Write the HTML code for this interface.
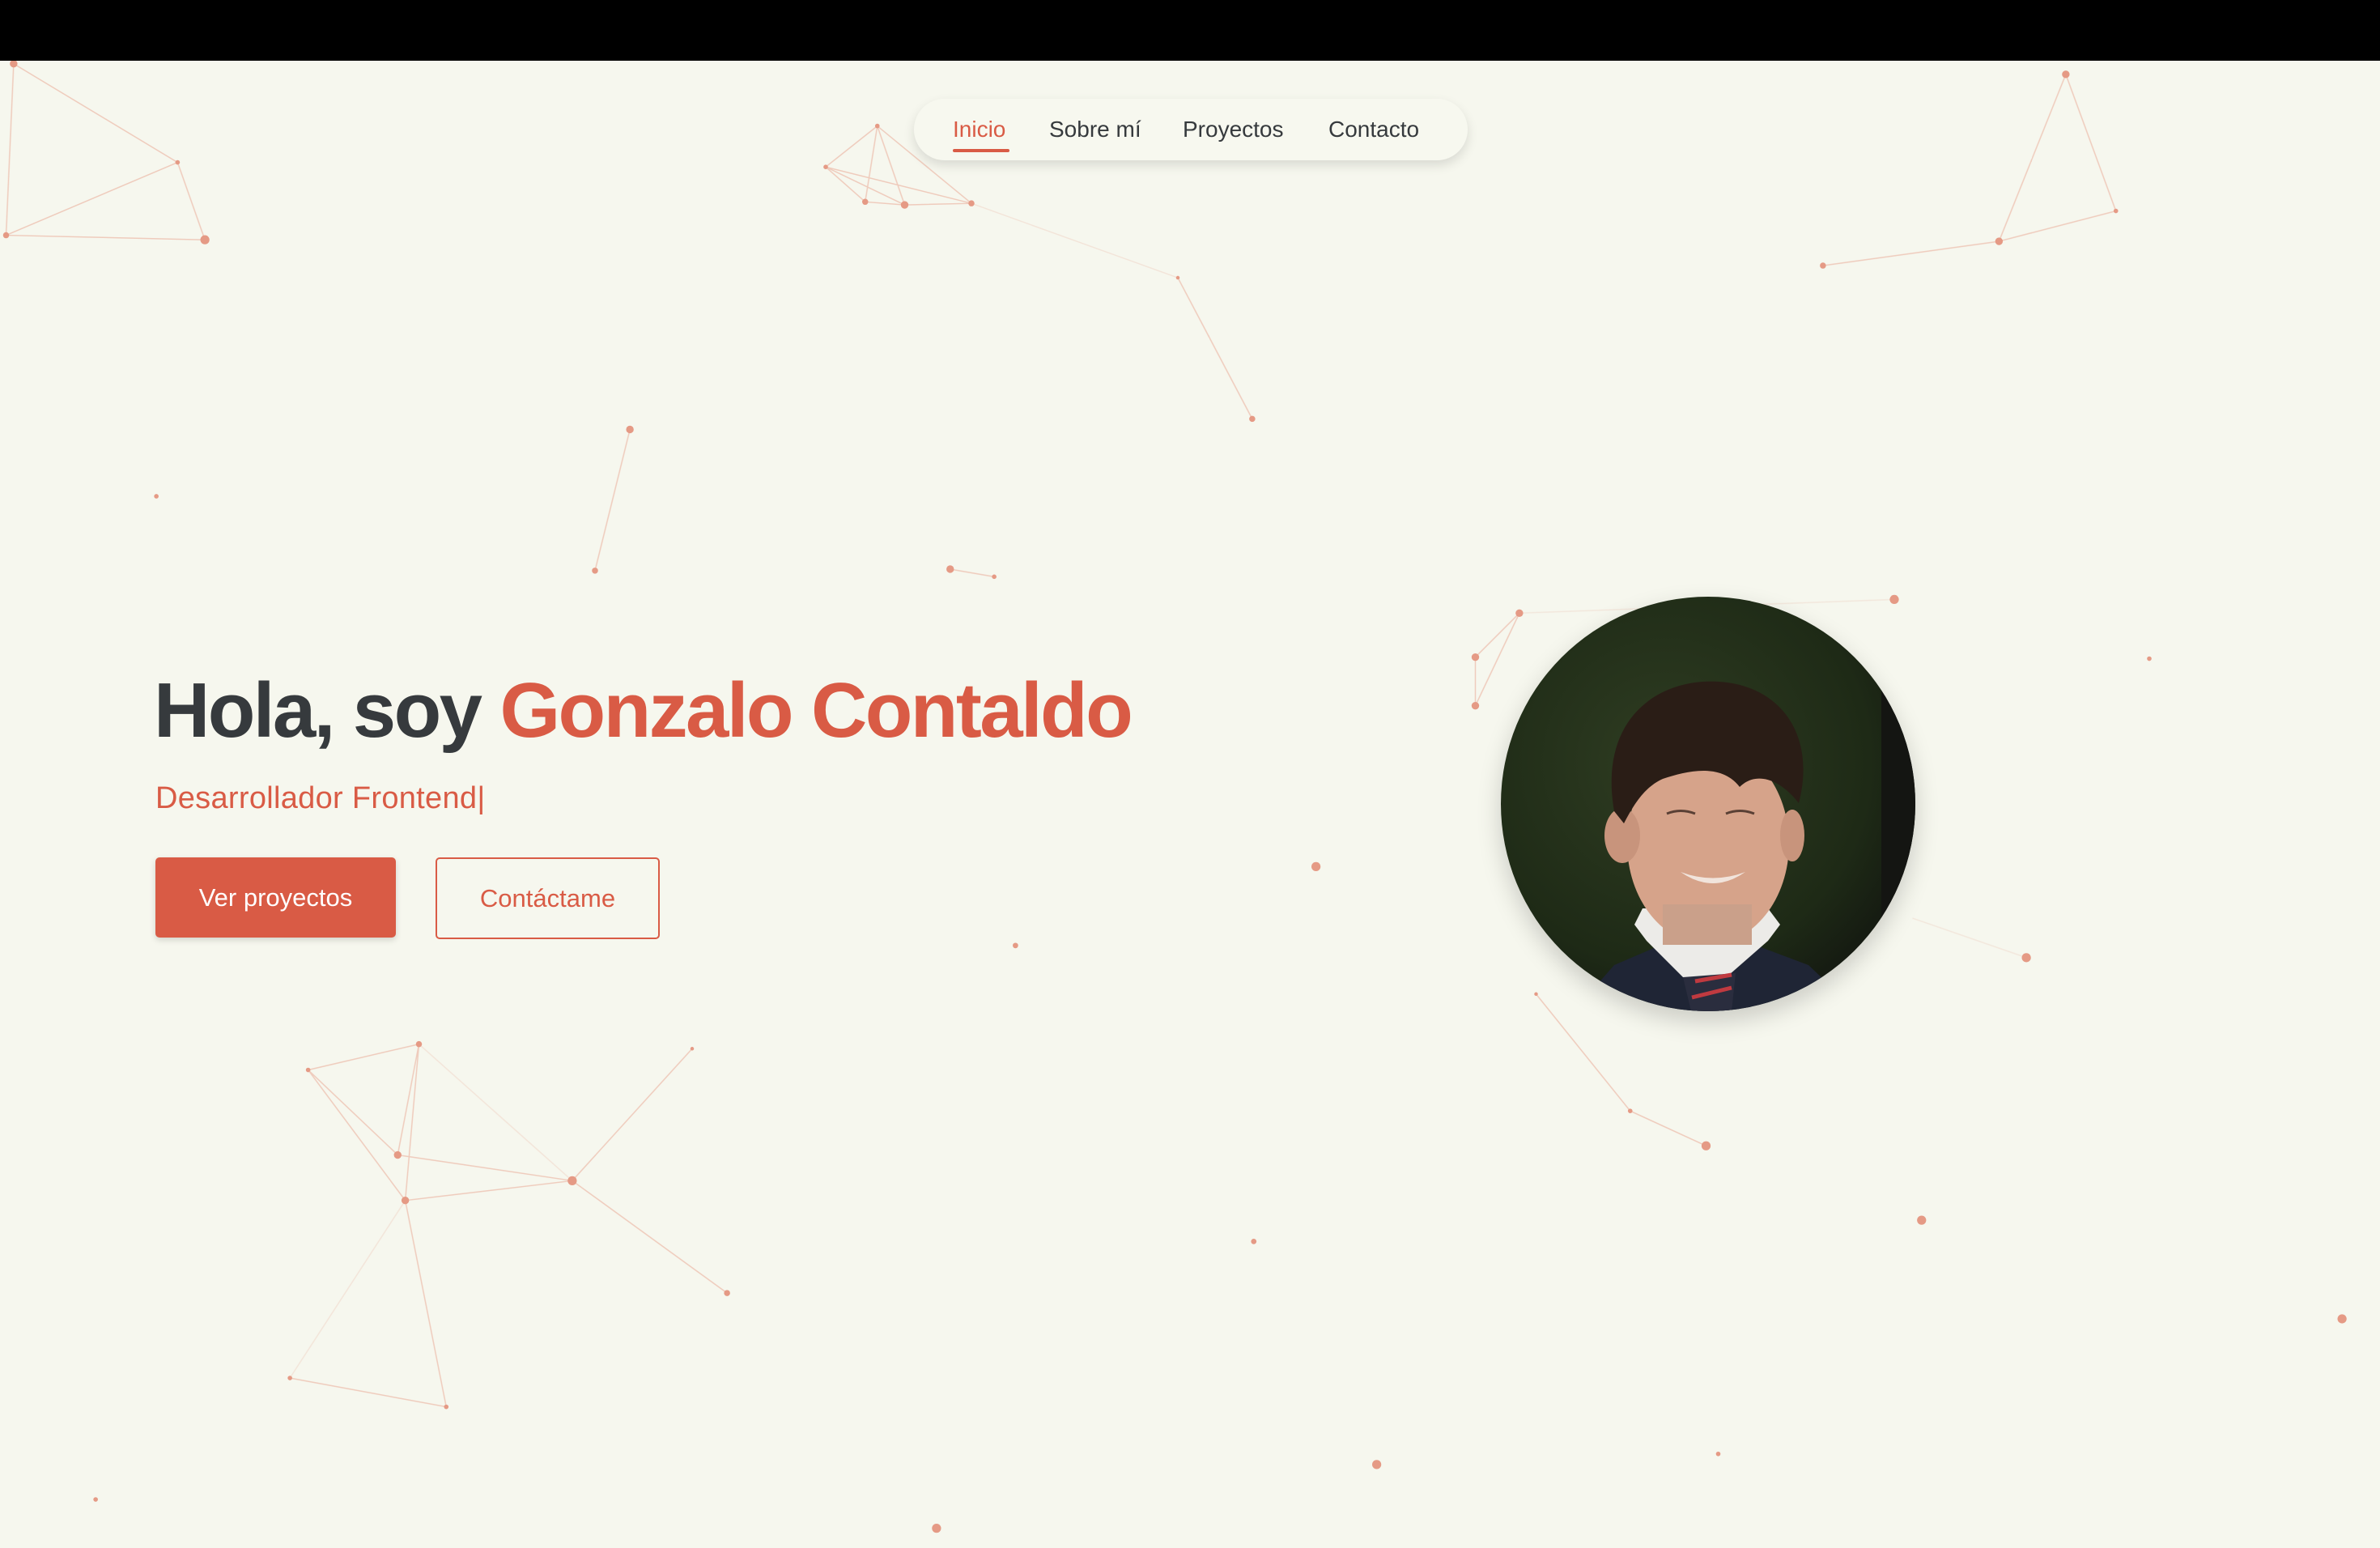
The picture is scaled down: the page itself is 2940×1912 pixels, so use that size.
<!DOCTYPE html>
<html><head><meta charset="utf-8"><style>
html,body{margin:0;padding:0}
body{width:2940px;height:1912px;background:#f6f7ee;position:relative;overflow:hidden;font-family:"Liberation Sans",sans-serif}
.top{position:absolute;left:0;top:0;width:2940px;height:75px;background:#000}
svg.bg{position:absolute;left:0;top:0}
.nav{position:absolute;left:1129px;top:122px;width:684px;height:76px;border-radius:38px;background:#f7f8ef;box-shadow:0 6px 14px rgba(0,0,0,.12)}
.nav span{position:absolute;top:21px;font-size:28px;color:#363a3d;line-height:34px}
.nav .act{color:#d95b45}
.nav .ul{position:absolute;left:48px;top:62px;width:70px;height:4px;border-radius:2px;background:#d95b45}
h1{position:absolute;left:190px;top:823px;margin:0;font-size:96px;font-weight:bold;color:#363a3d;letter-spacing:-2.6px;white-space:nowrap;line-height:110px}
h1 b{color:#d95b45}
.sub{position:absolute;left:192px;top:962px;font-size:38px;color:#d95b45;letter-spacing:0.3px;line-height:48px}
.b1{position:absolute;left:192px;top:1059px;width:297px;height:99px;background:#d95b45;border-radius:5px;color:#fff;font-size:31px;line-height:99px;text-align:center;box-shadow:0 3px 8px rgba(0,0,0,.15)}
.b2{position:absolute;left:538px;top:1059px;width:273px;height:97px;border:2px solid #d95b45;border-radius:5px;color:#d95b45;font-size:31px;line-height:97px;text-align:center}
.ph{position:absolute;left:1854px;top:737px;width:512px;height:512px;border-radius:50%;overflow:hidden;box-shadow:0 12px 30px rgba(0,0,0,.18)}
</style></head><body>
<svg class="bg" width="2940" height="1912" viewBox="0 0 1568 1020" preserveAspectRatio="none">
<g stroke="#e9a894" stroke-width="0.8" fill="none" opacity=".55">
<path d="M9 42L117 107L135 158L4 155L9 42M4 155L117 107"/>
<path d="M578 83L544 110L570 133L596 135L640 134L578 83L570 133M578 83L596 135M544 110L596 135M544 110L640 134"/>
<path d="M640 134L776 183" opacity=".4"/><path d="M776 183L825 276"/>
<path d="M1361 49L1317 159L1394 139L1361 49M1317 159L1201 175"/>
<path d="M415 283L392 376M626 375L655 380"/>
<path d="M1001 404L972 433L972 465L1001 404"/><path d="M1001 404L1248 395M1260 605L1335 631" opacity=".35"/>
<path d="M1012 655L1074 732L1124 755"/>
<path d="M203 705L276 688L262 761L203 705L267 791L276 688M262 761L377 778L267 791M377 778L456 691M377 778L479 852M267 791L294 927L191 908"/>
<path d="M276 688L377 778M267 791L191 908" opacity=".4"/>
</g>
<g fill="#e59a85">
<circle cx="9" cy="42" r="2.5"/><circle cx="117" cy="107" r="1.5"/><circle cx="135" cy="158" r="3"/><circle cx="4" cy="155" r="2"/>
<circle cx="578" cy="83" r="1.5"/><circle cx="544" cy="110" r="1.5"/><circle cx="570" cy="133" r="2"/><circle cx="596" cy="135" r="2.5"/><circle cx="640" cy="134" r="2"/>
<circle cx="776" cy="183" r="1.2"/><circle cx="825" cy="276" r="2"/>
<circle cx="1361" cy="49" r="2.5"/><circle cx="1317" cy="159" r="2.5"/><circle cx="1394" cy="139" r="1.5"/><circle cx="1201" cy="175" r="2"/>
<circle cx="415" cy="283" r="2.5"/><circle cx="392" cy="376" r="2"/><circle cx="626" cy="375" r="2.5"/><circle cx="655" cy="380" r="1.5"/><circle cx="103" cy="327" r="1.5"/>
<circle cx="1001" cy="404" r="2.5"/><circle cx="972" cy="433" r="2.5"/><circle cx="972" cy="465" r="2.5"/><circle cx="1248" cy="395" r="3"/><circle cx="1416" cy="434" r="1.5"/>
<circle cx="867" cy="571" r="3"/><circle cx="669" cy="623" r="1.8"/><circle cx="1335" cy="631" r="3"/>
<circle cx="1012" cy="655" r="1.2"/><circle cx="1074" cy="732" r="1.5"/><circle cx="1124" cy="755" r="3"/>
<circle cx="1266" cy="804" r="3"/><circle cx="1543" cy="869" r="3"/><circle cx="826" cy="818" r="1.8"/><circle cx="907" cy="965" r="3"/><circle cx="1132" cy="958" r="1.5"/><circle cx="617" cy="1007" r="3"/><circle cx="63" cy="988" r="1.5"/>
<circle cx="276" cy="688" r="2"/><circle cx="203" cy="705" r="1.5"/><circle cx="262" cy="761" r="2.5"/><circle cx="267" cy="791" r="2.5"/><circle cx="377" cy="778" r="3"/><circle cx="456" cy="691" r="1.2"/><circle cx="479" cy="852" r="2"/><circle cx="191" cy="908" r="1.5"/><circle cx="294" cy="927" r="1.5"/>
</g>
</svg>
<div class="top"></div>
<div class="nav">
<span class="act" style="left:48px">Inicio</span><div class="ul"></div>
<span style="left:167px">Sobre mí</span>
<span style="left:332px">Proyectos</span>
<span style="left:512px">Contacto</span>
</div>
<h1>Hola, soy <b>Gonzalo Contaldo</b></h1>
<div class="sub">Desarrollador Frontend|</div>
<div class="b1">Ver proyectos</div>
<div class="b2">Contáctame</div>
<div class="ph">
<svg width="512" height="512" viewBox="0 0 512 512">
<defs><radialGradient id="g" cx="40%" cy="40%" r="70%"><stop offset="0" stop-color="#2f3d22"/><stop offset=".7" stop-color="#1e2a16"/><stop offset="1" stop-color="#121510"/></radialGradient></defs>
<rect width="512" height="512" fill="url(#g)"/>
<rect x="470" y="0" width="42" height="512" fill="#141512"/>
<path d="M90 512L140 455L210 425L300 425L380 455L440 512Z" fill="#1f2535"/>
<path d="M165 405L180 425L250 495L330 425L345 405L330 385L175 385Z" fill="#ecebe8"/>
<path d="M225 470L290 465L285 512L235 512Z" fill="#2a2d3e"/>
<path d="M240 475L285 467M236 495L285 483" stroke="#c03a40" stroke-width="5"/>
<ellipse cx="256" cy="305" rx="100" ry="125" fill="#d6a38a"/>
<rect x="200" y="380" width="110" height="50" fill="#caa08a"/>
<ellipse cx="150" cy="295" rx="22" ry="34" fill="#c8947c"/>
<ellipse cx="360" cy="295" rx="15" ry="32" fill="#c8947c"/>
<path d="M140 265C120 150 195 100 270 105C345 110 390 170 368 255C345 225 315 215 295 235C272 205 230 215 200 225C178 235 165 255 152 280Z" fill="#2a1d16"/>
<path d="M205 268Q222 261 240 268M278 268Q295 261 313 268" stroke="#5a4035" stroke-width="3" fill="none"/>
<path d="M222 340Q262 355 302 340Q262 368 222 340Z" fill="#f1e4dc"/>
</svg>
</div>
</body></html>
